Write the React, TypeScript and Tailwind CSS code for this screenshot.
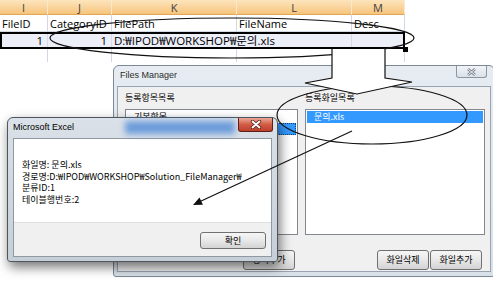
import React from 'react';

const sheetGrid = 'grid grid-cols-[48px_64px_125px_115px_53px] w-[405px]';
const ko = "font-['Noto_Sans_CJK_KR',sans-serif]";
const titleFont = "font-['Liberation_Sans',sans-serif]";

function Sheet() {
  const letters = ['I', 'J', 'K', 'L', 'M'];
  const names = ['FileID', 'CategoryID', 'FilePath', 'FileName', 'Desc'];
  return (
    <div className="font-['Open_Sans','Noto_Sans_CJK_KR',sans-serif] text-[11px] leading-none text-black">
      {/* column letters */}
      <div className={`${sheetGrid} h-[15px]`}>
        {letters.map(l => (
          <div
            key={l}
            className="flex items-center justify-center border-r border-b border-r-[#fbe9cf] border-b-[#e0a855] bg-linear-to-b from-[#fde5bd] to-[#f6c47c] text-[#3d3d3d]"
          >
            {l}
          </div>
        ))}
      </div>
      {/* field names */}
      <div className={`${sheetGrid} h-[17px]`}>
        {names.map(n => (
          <div key={n} className="flex items-center pl-[2px] pt-px border-r border-b border-[#d0d7e5] whitespace-nowrap">
            {n}
          </div>
        ))}
      </div>
      {/* selected data row */}
      <div className={`${sheetGrid} relative h-[17px] text-[11.5px] bg-[#eceef8] outline-2 outline-black -outline-offset-2`}>
        <div className="flex items-center justify-end pr-[4px] border-r border-[#d5dae6]">1</div>
        <div className="flex items-center justify-end pr-[4px] border-r border-[#d5dae6]">1</div>
        <div className="flex items-center pl-[2px] whitespace-nowrap">D:₩IPOD₩WORKSHOP₩문의.xls</div>
        <div className="border-r border-[#d5dae6]" />
        <div />
        <div className="absolute right-[-3px] bottom-[-3px] w-[5px] h-[5px] bg-black" />
      </div>
      <div className={`${sheetGrid} h-[13px]`}>
        {letters.map(l => (
          <div key={l} className="border-r border-[#d0d7e5]" />
        ))}
      </div>
    </div>
  );
}

function WinButton({ label, className = '' }: { label: string; className?: string }) {
  return (
    <div
      className={`h-[20px] flex items-center justify-center rounded-[3px] border border-[#707070] bg-linear-to-b from-[#f6f6f6] via-[#e8e8e8] to-[#d3d3d3] text-[9px] text-black ${ko} ${className}`}
    >
      {label}
    </div>
  );
}

function FilesManager() {
  return (
    <div className="absolute left-[113px] top-[65px] w-[382px] h-[212px] flex flex-col px-[3px] pb-[4px] rounded-t-[6px] rounded-b-[3px] border border-[#7d8894] bg-linear-to-b from-[#e6ecf2] to-[#d8e0e8]">
      <div className={`relative h-[20px] flex items-center pl-[3px] text-[9px] text-[#2d2d2d] ${titleFont}`}>
        Files Manager
        <div className="absolute right-[4px] top-0 w-[31px] h-[12px] flex items-center justify-center rounded-b-[3px] border border-t-0 border-[#8c96a2] bg-linear-to-b from-[#f1f4f7] to-[#dbe1e8]">
          <svg width="11" height="8" viewBox="0 0 11 8">
            <path d="M2 1 L9 7 M9 1 L2 7" stroke="#7d848c" strokeWidth="2.6" />
            <path d="M2 1 L9 7 M9 1 L2 7" stroke="#eef1f5" strokeWidth="1" />
          </svg>
        </div>
      </div>
      <div className={`flex-1 flex gap-[7px] pl-[7px] pt-[5px] border border-[#98a4b1] bg-[#f0f0f0] text-[9px] ${ko}`}>
        <div className="w-[173px] flex flex-col">
          <div className="h-[11px] leading-[11px]">등록항목목록</div>
          <div className="mt-[6px] h-[126px] bg-white border border-[#828790] p-px">
            <div className="h-[12px] leading-[12px] pl-[7px]">기본항목</div>
            <div className="h-[12px] leading-[12px] pl-[7px] bg-[#3399ff] text-white border border-dotted border-[#1a3d66]">
              WORKSHOP
            </div>
          </div>
          <div className="mt-[15px] flex justify-end pr-[3px]">
            <WinButton label="항목추가" className="w-[52px]" />
          </div>
        </div>
        <div className="w-[180px] flex flex-col">
          <div className="h-[11px] leading-[11px]">등록화일목록</div>
          <div className="mt-[6px] h-[126px] bg-white border border-[#828790] p-px">
            <div className="h-[12px] leading-[12px] pl-[7px] bg-[#3399ff] text-white">문의.xls</div>
          </div>
          <div className="mt-[15px] flex justify-end gap-px pr-[3px]">
            <WinButton label="화일삭제" className="w-[52px]" />
            <WinButton label="화일추가" className="w-[52px]" />
          </div>
        </div>
      </div>
    </div>
  );
}

function MessageBox() {
  const lines = [
    '화일명: 문의.xls',
    '경로명:D:₩IPOD₩WORKSHOP₩Solution_FileManager₩',
    '분류ID:1',
    '테이블행번호:2',
  ];
  return (
    <div className="absolute left-[7px] top-[117px] w-[271px] h-[145px] flex flex-col px-[5px] pb-[4px] rounded-t-[6px] rounded-b-[3px] border border-[#4d555e] bg-linear-to-b from-[#dbe1e8] to-[#c6ced7] shadow-[2px_5px_12px_rgba(0,0,0,0.55)]">
      <div className={`relative h-[20px] flex items-center text-[9px] text-black ${titleFont}`}>
        <div className="absolute left-[112px] top-[3px] w-[110px] h-[13px] bg-[#3f80d6] blur-[3px] opacity-70" />
        <span className="relative">Microsoft Excel</span>
        <div className="absolute right-[-1px] top-0 w-[35px] h-[14px] flex items-center justify-center rounded-b-[3px] border border-t-0 border-[#5c2018] bg-linear-to-b from-[#eaa896] via-[#d25c45] to-[#bd3f2c]">
          <svg width="12" height="9" viewBox="0 0 12 9">
            <path d="M2.5 1.5 L9.5 7.5 M9.5 1.5 L2.5 7.5" stroke="#5a1d15" strokeWidth="3.4" strokeLinecap="round" />
            <path d="M2.5 1.5 L9.5 7.5 M9.5 1.5 L2.5 7.5" stroke="white" strokeWidth="1.9" strokeLinecap="round" />
          </svg>
        </div>
      </div>
      <div className={`flex-1 flex flex-col border border-[#8f99a4] bg-white text-[9px] text-black ${ko}`}>
        <div className="flex-1 pl-[8px] pt-[20px] leading-[11.5px] whitespace-nowrap">
          {lines.map(l => (
            <div key={l}>{l}</div>
          ))}
        </div>
        <div className="h-[34px] flex justify-end items-start pt-[9px] pr-[5px] bg-[#f0f0f0] border-t border-[#dfdfdf]">
          <div className="w-[66px] h-[17px] flex items-center justify-center rounded-[3px] border border-[#707070] bg-linear-to-b from-[#f6f6f6] via-[#e8e8e8] to-[#d3d3d3]">
            확인
          </div>
        </div>
      </div>
    </div>
  );
}

function Annotations() {
  return (
    <svg className="absolute inset-0 pointer-events-none" width={493} height={281} viewBox="0 0 493 281">
      <ellipse cx={232} cy={38} rx={182} ry={20} fill="none" stroke="#111" strokeWidth={1.2} />
      <ellipse cx={372} cy={115} rx={95} ry={29} fill="none" stroke="#111" strokeWidth={1.2} />
      <polygon points="332,49 385,49 385,78 412,82 357,94 305,83 332,78" fill="white" />
      <polyline
        points="332,49 332,78 305,83 357,94 412,82 385,78 385,49"
        fill="none"
        stroke="#111"
        strokeWidth={1.2}
      />
      <line x1={352} y1={131} x2={199} y2={202} stroke="#111" strokeWidth={1.2} />
      <polygon points="193,205 202.9,204.8 199.5,197.6" fill="#111" />
    </svg>
  );
}

export default function App() {
  return (
    <div className="relative w-[493px] h-[281px] overflow-hidden bg-white">
      <Sheet />
      <FilesManager />
      <MessageBox />
      <Annotations />
    </div>
  );
}
